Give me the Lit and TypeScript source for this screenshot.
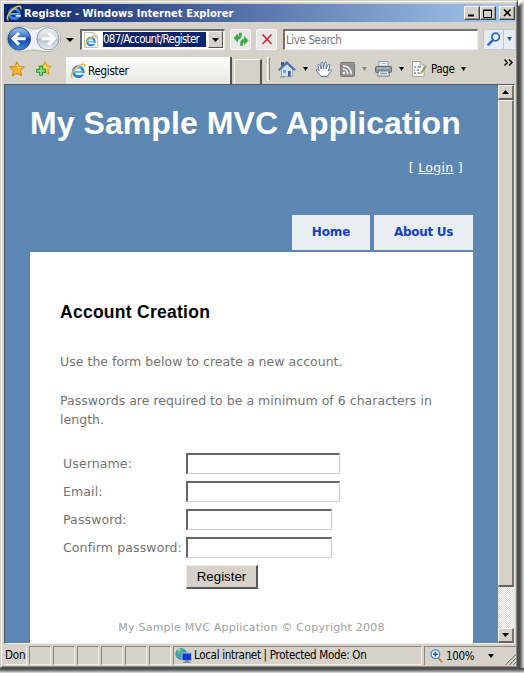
import { LitElement, html, css, svg } from "lit";
import { customElement } from "lit/decorators.js";

const ieLogo = svg`
  <circle cx="8.3" cy="8.7" r="4.9" fill="none" stroke="#2a86d8" stroke-width="3"/>
  <path d="M4 8.9h9" stroke="#56b4f2" stroke-width="1.8"/>
  <path d="M9.6 10.9h5.4" stroke="#e9eef2" stroke-width="1.5"/>
  <path d="M5 6.4a4.6 4.6 0 0 1 6-1.8" fill="none" stroke="#7cc8f6" stroke-width="1.2"/>
  <path d="M2.6 15C-.4 14 2.4 7.6 7.6 3.6 11.6.6 15.8.2 14.8 4.2" fill="none" stroke="#efbb3c" stroke-width="1.5"/>`;

const icon = (w: number, h: number, body: unknown) =>
  html`<svg width=${w} height=${h} viewBox="0 0 ${w} ${h}">${body}</svg>`;

const backForward = icon(56, 28, svg`
  <defs>
    <linearGradient id="blue" x1="0" y1="0" x2="0" y2="1">
      <stop offset="0" stop-color="#a9c4ec"/><stop offset=".42" stop-color="#3d70c4"/>
      <stop offset=".5" stop-color="#1646a2"/><stop offset="1" stop-color="#3f8be0"/>
    </linearGradient>
    <linearGradient id="pale" x1="0" y1="0" x2="0" y2="1">
      <stop offset="0" stop-color="#eceff4"/><stop offset=".48" stop-color="#d0d5de"/>
      <stop offset=".52" stop-color="#b9c2cf"/><stop offset="1" stop-color="#e6ecf3"/>
    </linearGradient>
  </defs>
  <path d="M13.5 1C22 1 22 4 28 4S35 1 42 1a12.6 12.6 0 0 1 0 25.6c-7 0-8-1.6-14-1.6s-7 1.6-14.5 1.6A12.8 12.8 0 0 1 13.5 1z" fill="#f0f1f3" stroke="#aaa9a8" stroke-width=".8"/>
  <circle cx="13.2" cy="13.8" r="11.3" fill="url(#blue)" stroke="#2b4c86"/>
  <path d="M13 8l-6 5.8 6 5.8M7.6 13.8h12" fill="none" stroke="#fff" stroke-width="3"/>
  <circle cx="42" cy="13.8" r="11.1" fill="url(#pale)" stroke="#9aa0aa"/>
  <path d="M42.4 8l6 5.8-6 5.8M47.8 13.8h-12" fill="none" stroke="#fff" stroke-width="3"/>`);

const pageLogo = icon(14, 16, svg`
  <path d="M.5.5h9.500l3.500 3.500v11.500H.5z" fill="#fdfdfa" stroke="#c6c2ae"/>
  <path d="M10 .5V4h3.500" fill="#e8e6da" stroke="#c6c2ae"/>
  <g transform="translate(.6 3) scale(.76)">${ieLogo}</g>`);

const refresh = icon(16, 16, svg`
  <path d="M1 7L4.600 3v2.600c1.600 0 1.800-.8 1.800-3.600h2c0 5-.8 6.200-3.800 6.200V11z" fill="#3cb04a" stroke="#1f8433" stroke-width=".5"/>
  <path d="M15 9.500l-3.600 4v-2.600c-1.600 0-1.800.8-1.800 3.600h-2c0-5 .8-6.200 3.800-6.200V5.500z" fill="#3cb04a" stroke="#1f8433" stroke-width=".5"/>`);

const stop = icon(12, 12, svg`<path d="M1.5 1.5l9 9.500M10.500 1.500l-9 9.500" stroke="#d2303c" stroke-width="1.800" fill="none"/>`);

const lens = icon(14, 14, svg`
  <path d="M6 8L1.5 12.500" stroke="#3a6fc8" stroke-width="2.600" stroke-linecap="round"/>
  <circle cx="8.600" cy="5" r="3.800" fill="#e6f1fc" stroke="#2f66c4" stroke-width="1.700"/>`);

const star = icon(16, 16, svg`
  <path d="M8 .8l2.200 4.700 5.100.6-3.800 3.500 1 5.200L8 12.300l-4.500 2.500 1-5.200L.7 6.100l5.100-.6z" fill="#fdb32a" stroke="#d07f12"/>
  <path d="M8 3l1.500 3.300 3 .5" fill="none" stroke="#ffe58a"/>`);

const addStar = icon(17, 16, svg`
  <path d="M10 .8l1.800 4 4.500.5-3.400 3.100 1 4.800L10 11l-4 2 1-4.600L3.600 5.300l4.600-.5z" fill="#fbd24a" stroke="#c79a1a"/>
  <path d="M4.600 5.300h3v3h3v3h-3v3h-3v-3h-3v-3h3z" fill="#7be07a" stroke="#1d9133"/>`);

const home = icon(18, 17, svg`
  <path d="M3 1h3v4H3z" fill="#3c55b8"/>
  <path d="M3.500 8v7.500h11V8L9 3z" fill="#d3e2f3" stroke="#8b9fb9" stroke-width=".8"/>
  <path d="M.8 9.200L8.800 1.600 17 9.200" fill="none" stroke="#4f74ad" stroke-width="2.200"/>
  <path d="M5 9h3v3H5z" fill="#7da3d4"/><path d="M10 10h2.600v5.500H10z" fill="#3b5e98"/>
  <path d="M2 16h5" stroke="#69a36a"/>`);

const hand = icon(18, 17, svg`
  <path d="M6 15.500C4.500 13 1.400 10.500 1.200 9c.3-1.300 1.900-.7 3 .8L2.900 4.400c.2-1.500 1.600-1.200 2 0L6.200 8 6 2.300c.3-1.400 1.800-1.300 2 0l.5 5.200.9-5.600c.5-1.200 1.900-.9 1.900.4L11 8l2-4c.8-1.100 2-.5 1.700.8L13.300 10c2-1.700 3-.9 3 .1l-2.600 3.100-1.200 2.500z" fill="#fff" stroke="#5d719e"/>`);

const feed = icon(15, 15, svg`
  <rect x=".5" y=".5" width="14" height="14" rx="1" fill="#929292" stroke="#777"/>
  <circle cx="4" cy="11" r="1.300" fill="#fff"/>
  <path d="M3 7.200a5 5 0 0 1 4.900 5M3 3.700a8.500 8.500 0 0 1 8.400 8.500" fill="none" stroke="#f5f5f5" stroke-width="1.500"/>`);

const printer = icon(17, 16, svg`
  <path d="M4 .5h9V6H4z" fill="#fff" stroke="#8a97a8"/>
  <path d="M5.500 2.500h6M5.500 4.300h6" stroke="#aab6c6" stroke-width=".8"/>
  <rect x=".5" y="5.500" width="16" height="6" rx="1.200" fill="#8b929b" stroke="#5e666f"/>
  <path d="M2 7h13" stroke="#c4cad1"/>
  <path d="M3.500 10h10l1 5h-12z" fill="#f1f7fc" stroke="#6c7784"/>
  <path d="M5 12.500h7" stroke="#5d9bc9" stroke-width="1.500"/>`);

const pageTool = icon(16, 16, svg`
  <path d="M1.500.5h7.500l4 3.500v11.500H1.500z" fill="#fff" stroke="#a5a499"/>
  <path d="M9 .5V4h4" fill="none" stroke="#a5a499"/>
  <path d="M3 6h2M6.500 6H10M3 9h1M5.500 9H8M3 12h2M6.500 12H9" stroke="#7c8a9c" stroke-width="1.300"/>
  <path d="M15 5l-4.500 6.500" stroke="#8aa35a" stroke-width="2"/>
  <path d="M10.600 11.300L9.500 13" stroke="#c39d3b" stroke-width="1.300"/>`);

const globe = icon(17, 16, svg`
  <circle cx="6.200" cy="6" r="5.500" fill="#3aa0c8" stroke="#2c7c9c" stroke-width=".6"/>
  <path d="M2 3.500C4 .5 6 1 7.500 2.500L5.500 5 3 6.500zM7 6.500l3-1.500.8 2.500-3 2.500zM2 8l2.500 1v2z" fill="#52c65a"/>
  <path d="M3 2.500l2-1.200" stroke="#e9fbff"/>
  <rect x="7" y="5" width="9.500" height="7.500" fill="#1238d8" stroke="#b0bccc"/>
  <path d="M10 12.500h4v1.500h-4zM8 14.500h8" fill="#9aa6b6" stroke="#7b8795" stroke-width=".9"/>`);

const zoomLens = icon(13, 14, svg`
  <path d="M8 8.500l3.500 4" stroke="#c98b3c" stroke-width="2.200" stroke-linecap="round"/>
  <circle cx="5.400" cy="5.200" r="4.300" fill="#eaf4fd" stroke="#4b8ccc" stroke-width="1.300"/>
  <path d="M5.400 2.800v4.800M3 5.200h4.800" stroke="#1b56b4" stroke-width="1.600"/>`);

const chevrons = icon(9, 7, svg`<path d="M.5.5l3 3-3 3M5 .5l3 3-3 3" fill="none" stroke="#000" stroke-width="1.400"/>`);

const grip = icon(12, 12, svg`
  <path d="M1 12L12 1M5 12l7-7M9 12l3-3" stroke="#85827c" stroke-width="1.400"/>
  <path d="M0 12L12 0M4 12l8-8M8 12l4-4" stroke="#fff" stroke-width=".7"/>`);

const arrow = (color = "#000", w = 7, up = false) => html`
  <svg width=${w} height="4" viewBox="0 0 8 4" preserveAspectRatio="none">
    <path d=${up ? "M0 4h8L4 0z" : "M0 0h8L4 4z"} fill=${color} />
  </svg>`;

@customElement("app-root")
export class AppRoot extends LitElement {
  static styles = css`
    :host {
      display: block;
      width: 524px;
      height: 673px;
      overflow: hidden;
      --face: #d6d2ca;
      --light: #f6f4f0;
      --dark: #55534f;
      --ui: "DejaVu Sans Condensed", "DejaVu Sans", sans-serif;
      --body: "DejaVu Sans", sans-serif;
    }
    * { box-sizing: border-box; }
    svg { display: block; flex: none; }
    .shadow {
      width: 524px; height: 673px;
      padding: 0 6px 5px 0;
      background:
        linear-gradient(135deg, #fff 3px, transparent 6px) 518px 0 / 6px 6px no-repeat,
        linear-gradient(90deg, #444, #555 2px, #999 4px, #e4e4e4) 518px 0 / 6px 668px no-repeat,
        linear-gradient(#444, #666 2px, #e4e4e4) 0 668px / 524px 5px no-repeat;
    }
    .window {
      height: 668px;
      background: var(--face);
      border: 1px solid #d0ccc4;
      border-right-color: #505050;
      border-bottom-color: #505050;
      box-shadow: inset 1px 1px #fff, inset -1px -1px #8a8780;
      padding: 3px 1px 0 3px;
      display: flex;
      flex-direction: column;
      font-family: var(--ui);
      font-size: 11px;
      color: #000;
      white-space: nowrap;
    }
    .title {
      height: 18px;
      display: flex;
      align-items: center;
      padding: 0 1px 0 2px;
      background: linear-gradient(90deg, #0c246a, #a6caf0);
      color: #fff;
      font-weight: bold;
      letter-spacing: 0.05px;
    }
    .title span { margin-left: 2px; flex: 1; }
    .cap {
      width: 16px; height: 14px;
      background: var(--face);
      border: 1px solid #fff;
      border-right-color: #404040; border-bottom-color: #404040;
      box-shadow: inset -1px -1px #9a9894;
      display: flex; align-items: center; justify-content: center;
    }
    .cap.close { margin-left: 3px; }
    .nav {
      height: 34px;
      display: flex;
      align-items: center;
      padding-left: 2px;
    }
    .caret { margin: 2px 0 0 4px; }
    .addr {
      width: 145px; height: 21px;
      margin: 0 0 0 6px;
      border: 2px solid #6c6a66;
      border-right: 1px solid #f2f0ec; border-bottom: 1px solid #f2f0ec;
      background: #fff;
      display: flex;
      align-items: center;
      padding-left: 2px;
    }
    .addr span {
      margin-left: 5px;
      width: 103px; height: 15px; line-height: 15px;
      background: #0c246a; color: #fff;
      font-size: 11.5px; letter-spacing: -0.75px;
    }
    .drop {
      width: 15px; height: 17px;
      margin-left: 2px;
      background: var(--face);
      border: 1px solid #f4f2ee;
      border-right-color: #555; border-bottom-color: #555;
      display: flex; align-items: center; justify-content: center;
    }
    .btn {
      width: 21px; height: 21px;
      border: 1px solid #f8f7f6;
      background: #e9e8e7;
      display: flex; align-items: center; justify-content: center;
      border-radius: 2px;
    }
    .btn.reload { margin-left: 5px; }
    .btn.halt { margin-left: 5px; }
    .btn.find { margin-left: 5px; background: #e7ebf3; border-color: #c2cad8; border-radius: 2px 0 0 2px; }
    .btn.more { width: 12px; background: #e7ebf3; border-color: #c2cad8; border-left: 0; border-radius: 0 2px 2px 0; }
    .search {
      width: 195px; height: 21px;
      margin-left: 6px;
      border: 2px solid #74716c;
      border-right: 1px solid #f2f0ec; border-bottom: 1px solid #f2f0ec;
      background: #fff; color: #777;
      font-size: 11.5px; line-height: 18px; letter-spacing: -0.4px;
      padding-left: 1px;
    }
    .tabs { height: 28px; display: flex; }
    .tabs > .item { height: 26px; display: flex; align-items: center; }
    .fav { margin-left: 5px; }
    .add { margin-left: 10px; }
    .tab {
      width: 166px; height: 27px;
      margin: 1px 0 0 14px;
      background: linear-gradient(#fdfdfd, #e8e7e4);
      border-right: 2px solid var(--dark);
      display: flex; align-items: center; gap: 2px;
      padding-left: 4px;
      font-size: 11.5px; letter-spacing: -0.25px;
    }
    .newtab {
      width: 28px; height: 25px; margin: 3px 0 0 2px;
      border: 1px solid var(--light); border-right: 2px solid var(--dark); border-bottom: 0;
    }
    .sep { width: 3px; height: 24px; margin: 1px 8px 0 5px; border: 1px solid #fff; border-right-color: #8a8782; }
    .dd { margin-left: 7px; }
    .gap { margin-left: 7px; }
    .gap.wide { margin-left: 8px; }
    .pagetext { margin-left: 4px; font-size: 11.5px; letter-spacing: -0.4px; }
    .chev { margin: -7px 3px 0 auto; }
    .client {
      height: 560px; margin-right: 1px;
      border: 1px solid #555a60;
      border-right-color: #e8e6e2; border-bottom-color: #f2f0ec;
      display: flex;
    }
    .page {
      flex: 1;
      background: #5c87b2;
      padding: 0 25px;
      font-family: var(--body);
      color: #727272;
      font-size: 12.5px;
      letter-spacing: 0.03px;
      display: flex; flex-direction: column;
    }
    h1 {
      margin: 19px 0 0;
      font: bold 32px/38px "Liberation Sans", Arial, sans-serif;
      letter-spacing: 0.07px;
      color: #fff;
    }
    .login {
      height: 20px; line-height: 20px; margin-top: 16px; padding-right: 10px;
      text-align: right; color: #fff; letter-spacing: 0.3px;
    }
    .menu { height: 35px; margin-top: 37px; display: flex; justify-content: flex-end; gap: 4px; }
    .menu a {
      background: #e8eef4; color: #1440c8; font-weight: bold;
      font-size: 12px; letter-spacing: -0.1px;
      line-height: 35px; text-align: center; width: 78px;
    }
    .menu a.about { width: 99px; letter-spacing: -0.3px; }
    .main { flex: 1; margin-top: 2px; background: #fff; padding: 0 30px; }
    h2 {
      margin: 48px 0 0; color: #000;
      font: bold 17.5px/24px "Liberation Sans", Arial, sans-serif;
      letter-spacing: 0.27px;
    }
    p { margin: 0; line-height: 19px; white-space: normal; }
    .intro { margin-top: 28px; }
    .rule { margin-top: 20px; }
    form { margin: 24px 0 0 3px; display: grid; grid-template-columns: 123px auto; justify-items: start; grid-auto-rows: 28px; }
    label { line-height: 22px; letter-spacing: 0.12px; }
    .field {
      width: 154px; height: 21px;
      border: 2px solid #666; border-right: 1px solid #ccc; border-bottom: 1px solid #ccc;
      background: #fff;
    }
    .field.short { width: 146px; }
    .submit {
      grid-column: 2;
      width: 72px; height: 24px;
      background: #d6d2ca;
      border: 1px solid #f0eeea; border-right: 2px solid #5a5854; border-bottom: 2px solid #5a5854;
      font: 13.3px/21px "Liberation Sans", Arial, sans-serif; color: #000;
      text-align: center; padding: 0;
    }
    .foot { margin-top: 26px; text-align: center; color: #a0a0a0; font-size: 11px; line-height: 18px; letter-spacing: 0.22px; }
    .scroll {
      width: 16px; display: flex; flex-direction: column;
      background: repeating-conic-gradient(#fff 0 25%, #dedad4 0 50%) 0 0 / 2px 2px;
    }
    .sb {
      height: 15px; background: var(--face);
      border: 1px solid var(--light); border-right: 2px solid #77746f; border-bottom: 2px solid #66635f;
      display: flex; align-items: center; justify-content: center;
    }
    .thumb {
      height: 487px; background: var(--face);
      border: 1px solid var(--light); border-right: 2px solid #77746f; border-bottom: 2px solid #66635f;
    }
    .fill { flex: 1; }
    .status { height: 21px; margin-top: 1px; display: flex; gap: 2px; font-size: 11.5px; letter-spacing: -0.32px; }
    .cell {
      width: 22px; height: 19px; margin-top: 1px; line-height: 17px;
      border: 1px solid #8a8782; border-right-color: #f2f0ec; border-bottom-color: #f2f0ec;
      overflow: hidden; display: flex; align-items: center;
    }
    .cell.done { width: 23px; border-left-color: transparent; border-top-color: transparent; letter-spacing: -0.2px; }
    .cell.zone { width: 249px; padding-left: 1px; gap: 2px; }
    .cell.zoom { flex: 1; padding-left: 5px; border-right: 0; border-bottom: 0; }
    .zoom span { margin-left: 3px; width: 42px; }
    .zoom .corner { margin: 5px 0 0 auto; }
  `;

  render() {
    return html`
      <div class="shadow">
        <div class="window">
          <div class="title">
            ${icon(16, 16, ieLogo)}
            <span>Register - Windows Internet Explorer</span>
            <div class="cap">${icon(10, 8, svg`<path d="M1 5.500h6v2H1z"/>`)}</div>
            <div class="cap">${icon(10, 9, svg`<path d="M.5 1h8v7.500h-8zM.5 1.500h8" fill="none" stroke="#000"/>`)}</div>
            <div class="cap close">${icon(9, 8, svg`<path d="M1 .5l6.500 6.500M7.500.5L1 7" stroke="#000" stroke-width="1.600"/>`)}</div>
          </div>

          <div class="nav">
            ${backForward}
            <div class="caret">${arrow("#000", 8)}</div>
            <div class="addr">${pageLogo}<span>087/Account/Register</span><div class="drop">${arrow()}</div></div>
            <div class="btn reload">${refresh}</div>
            <div class="btn halt">${stop}</div>
            <div class="search">Live Search</div>
            <div class="btn find">${lens}</div>
            <div class="btn more">${arrow("#2a5fb8", 5)}</div>
          </div>

          <div class="tabs">
            <div class="item fav">${star}</div>
            <div class="item add">${addStar}</div>
            <div class="tab">${icon(16, 16, ieLogo)}Register</div>
            <div class="newtab"></div>
            <div class="sep"></div>
            <div class="item">${home}</div>
            <div class="item dd">${arrow("#000", 5)}</div>
            <div class="item gap">${hand}</div>
            <div class="item gap">${feed}</div>
            <div class="item dd">${arrow("#8c8a86", 5)}</div>
            <div class="item gap wide">${printer}</div>
            <div class="item dd">${arrow("#000", 5)}</div>
            <div class="item gap">${pageTool}</div>
            <div class="item pagetext">Page</div>
            <div class="item dd">${arrow("#000", 5)}</div>
            <div class="item chev">${chevrons}</div>
          </div>

          <div class="client">
            <div class="page">
              <h1>My Sample MVC Application</h1>
              <div class="login">[ <u>Login</u> ]</div>
              <div class="menu"><a>Home</a><a class="about">About Us</a></div>
              <div class="main">
                <h2>Account Creation</h2>
                <p class="intro">Use the form below to create a new account.</p>
                <p class="rule">Passwords are required to be a minimum of 6 characters in length.</p>
                <form>
                  <label>Username:</label><div class="field"></div>
                  <label>Email:</label><div class="field"></div>
                  <label>Password:</label><div class="field short"></div>
                  <label>Confirm password:</label><div class="field short"></div>
                  <button class="submit" type="button">Register</button>
                </form>
                <div class="foot">My Sample MVC Application © Copyright 2008</div>
              </div>
            </div>
            <div class="scroll">
              <div class="sb">${arrow("#000", 7, true)}</div>
              <div class="thumb"></div>
              <div class="fill"></div>
              <div class="sb">${arrow()}</div>
            </div>
          </div>

          <div class="status">
            <div class="cell done">Done</div>
            ${[0, 1, 2, 3, 4, 5].map(() => html`<div class="cell"></div>`)}
            <div class="cell zone">${globe}<span>Local intranet | Protected Mode: On</span></div>
            <div class="cell zoom">${zoomLens}<span>100%</span>${arrow("#000", 6)}<div class="corner">${grip}</div></div>
          </div>
        </div>
      </div>`;
  }
}
